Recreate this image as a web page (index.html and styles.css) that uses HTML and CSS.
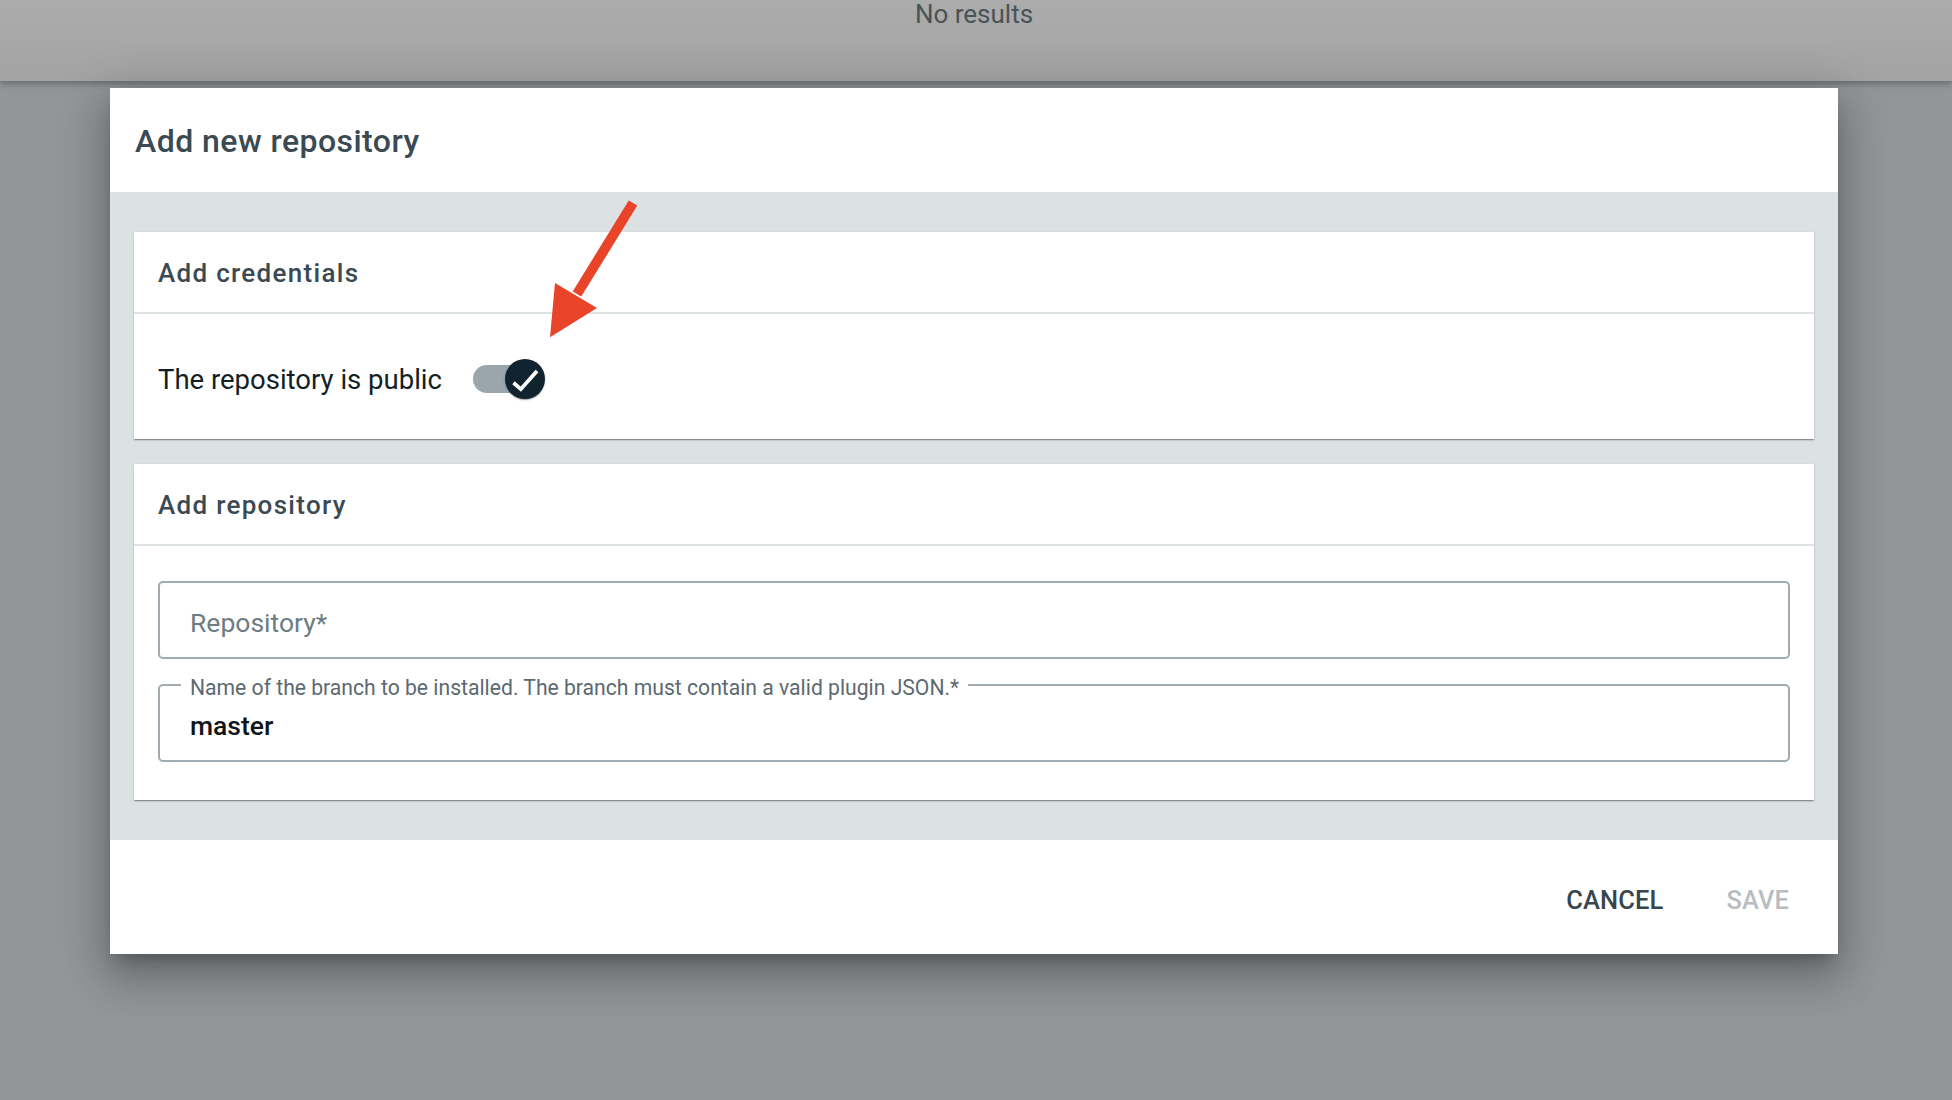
FILE: index.html
```html
<!DOCTYPE html>
<html lang="en">
<head>
<meta charset="utf-8">
<title>Add new repository</title>
<link rel="stylesheet" href="styles.css">
</head>
<body>
<header class="topbar"><span class="no-results">No results</span></header>
<main class="stage">
  <section class="dialog" role="dialog" aria-labelledby="dlg-title">
    <h2 class="dialog-title" id="dlg-title">Add new repository</h2>
    <div class="dialog-body">
      <div class="card">
        <h3 class="card-header">Add credentials</h3>
        <div class="card-content switch-row">
          <span class="switch-label">The repository is public</span>
          <span class="switch" role="switch" aria-checked="true">
            <span class="track"></span>
            <span class="thumb">
              <svg viewBox="0 0 40 40" width="40" height="40" aria-hidden="true"><path d="M8.5 23.8 L15.8 30.2 L32 12" fill="none" stroke="#ffffff" stroke-width="3.8" stroke-linecap="butt" stroke-linejoin="miter"/></svg>
            </span>
          </span>
        </div>
      </div>
      <div class="card">
        <h3 class="card-header">Add repository</h3>
        <div class="card-content fields">
          <div class="field"><span class="placeholder">Repository*</span></div>
          <div class="field filled">
            <span class="floating-label">Name of the branch to be installed. The branch must contain a valid plugin JSON.*</span>
            <span class="value">master</span>
          </div>
        </div>
      </div>
    </div>
    <div class="dialog-actions">
      <button class="btn">CANCEL</button>
      <button class="btn" disabled>SAVE</button>
    </div>
  </section>
</main>
<svg class="annotation" viewBox="0 0 110 150" width="110" height="150" aria-hidden="true">
  <line x1="93" y1="8" x2="37" y2="99" stroke="#e9432a" stroke-width="10"/>
  <polygon points="15,88 57,113 10,142.3" fill="#e9432a"/>
</svg>
</body>
</html>
```

FILE: styles.css
```css
* { box-sizing: border-box; }

html, body {
  margin: 0;
  padding: 0;
}

body {
  width: 1952px;
  height: 1100px;
  overflow: hidden;
  background: #929699;
  font-family: Roboto, "Liberation Sans", Arial, sans-serif;
  position: relative;
}

.topbar {
  height: 81px;
  background: linear-gradient(#acacac, #a3a3a3);
  box-shadow: 0 3px 6px rgba(0, 0, 0, 0.28);
  display: flex;
  justify-content: center;
  padding-top: 1px;
  padding-right: 4px;
  position: relative;
  z-index: 1;
}

.no-results {
  font-size: 26px;
  line-height: 26px;
  color: #4a5357;
}

.stage {
  padding: 7px 0 0 110px;
}

.dialog {
  width: 1728px;
  background: #ffffff;
  box-shadow: 0 11px 15px -7px rgba(0, 0, 0, 0.25),
              0 24px 38px 3px rgba(0, 0, 0, 0.18),
              0 9px 46px 8px rgba(0, 0, 0, 0.14);
  position: relative;
  z-index: 2;
}

.dialog-title {
  margin: 0;
  height: 104px;
  padding: 33px 25px 0;
  font-size: 32px;
  line-height: 40px;
  font-weight: 500;
  color: #3b4a52;
  letter-spacing: 0.45px;
}

.dialog-body {
  background: #dce1e4;
  padding: 40px 24px 40px;
  display: flex;
  flex-direction: column;
  gap: 25px;
}

.card {
  background: #ffffff;
  box-shadow: 0 2px 1px -1px rgba(0, 0, 0, 0.2),
              0 1px 1px 0 rgba(0, 0, 0, 0.14),
              0 1px 3px 0 rgba(0, 0, 0, 0.12);
}

.card-header {
  margin: 0;
  height: 82px;
  padding: 26px 24px 0;
  font-size: 26px;
  line-height: 30px;
  font-weight: 500;
  letter-spacing: 1.3px;
  color: #3b4a52;
  border-bottom: 2px solid #dde2e5;
}

.switch-row {
  display: flex;
  align-items: center;
  padding: 45px 24px 40px;
}

.switch-label {
  font-size: 27.5px;
  color: #131e25;
}

.switch {
  display: grid;
  width: 72px;
  height: 40px;
  margin-left: 31px;
}

.track {
  grid-area: 1 / 1;
  align-self: center;
  width: 68px;
  height: 28px;
  border-radius: 14px;
  background: #9aa5ac;
}

.thumb {
  grid-area: 1 / 1;
  justify-self: end;
  width: 40px;
  height: 40px;
  border-radius: 50%;
  background: #11232f;
  box-shadow: 0 2px 1px -1px rgba(0, 0, 0, 0.2),
              0 1px 1px 0 rgba(0, 0, 0, 0.14),
              0 1px 3px 0 rgba(0, 0, 0, 0.12);
  display: block;
}

.thumb svg { display: block; }

.fields {
  display: flex;
  flex-direction: column;
  gap: 25px;
  padding: 35px 24px 38px;
}

.field {
  position: relative;
  height: 78px;
  border: 2px solid #a1abb1;
  border-radius: 5px;
  display: flex;
  align-items: center;
  padding: 4px 30px 0;
  font-size: 26.5px;
}

.placeholder {
  color: #6e7c84;
}

.value {
  color: #111518;
  font-weight: 500;
}

.floating-label {
  position: absolute;
  top: -9px;
  left: 21px;
  padding: 0 9px;
  background: #ffffff;
  font-size: 21.15px;
  line-height: 22px;
  color: #5b6970;
}

.dialog-actions {
  height: 114px;
  display: flex;
  align-items: center;
  justify-content: flex-end;
  gap: 63px;
  padding: 5px 49px 0 0;
}

.btn {
  border: 0;
  background: none;
  padding: 0;
  font-family: inherit;
  font-size: 25.5px;
  font-weight: 500;
  letter-spacing: 0.1px;
  color: #37464e;
  cursor: pointer;
}

.btn:disabled {
  color: #b7bdc1;
  cursor: default;
}

.annotation {
  position: absolute;
  left: 540px;
  top: 195px;
  z-index: 3;
}
```
